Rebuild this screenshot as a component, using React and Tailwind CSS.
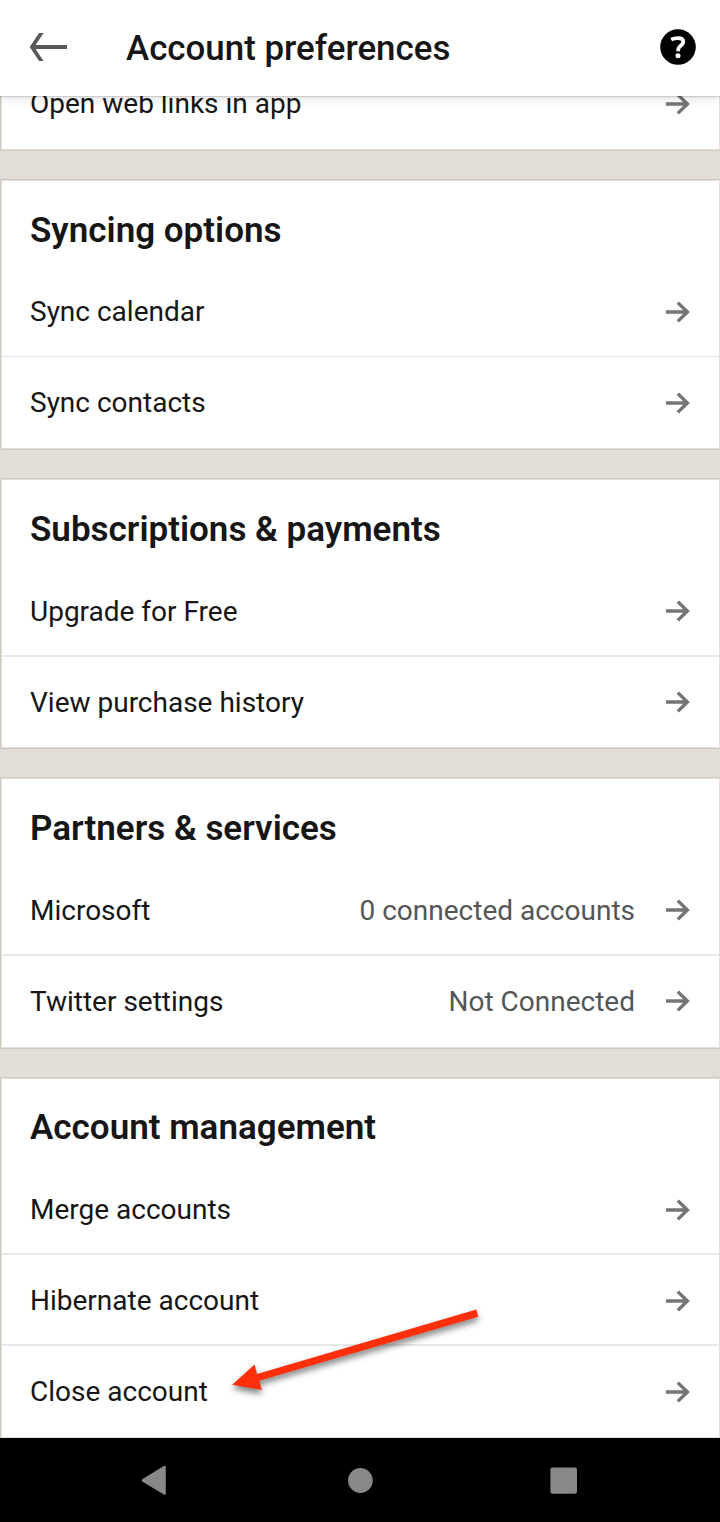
import React from "react";

const sections = [
  {
    title: "Syncing options",
    line: "h-[91px] pt-[2px] border-b border-[#e3e3e3]",
    end: "h-[91px]",
    rows: [{ label: "Sync calendar" }, { label: "Sync contacts" }],
  },
  {
    title: "Subscriptions & payments",
    line: "h-[91.6px] -mb-[0.6px] pt-[3px] border-b-2 border-[#e8e8e8] [&>svg]:mb-[2px]",
    end: "h-[91px] pt-[2px] [&>svg]:mb-px",
    rows: [{ label: "Upgrade for Free" }, { label: "View purchase history" }],
  },
  {
    title: "Partners & services",
    line: "h-[91px] pt-[3px] border-b-2 border-[#e8e8e8] [&>svg]:mb-[2px]",
    end: "h-[91px] pt-px [&>svg]:mb-[2px]",
    rows: [
      { label: "Microsoft", value: "0 connected accounts" },
      { label: "Twitter settings", value: "Not Connected" },
    ],
  },
  {
    title: "Account management",
    line: "h-[91px] pt-[4px] border-b-2 border-[#e8e8e8]",
    end: "h-[91px] pt-[2px]",
    rows: [
      { label: "Merge accounts" },
      { label: "Hibernate account" },
      { label: "Close account" },
    ],
  },
];

function ArrowRight() {
  return (
    <svg width="24" height="22" viewBox="0 0 24 22" fill="none" stroke="#757575" strokeWidth="3.4" className="shrink-0">
      <path d="M0 11H21.5M11.8 1.6L21.4 11L11.8 20.4" />
    </svg>
  );
}

function Row({ label, value, className }) {
  return (
    <div className={`flex items-center pl-7 pr-[29px] text-[28px] text-[#161616] ${className}`}>
      <span className="flex-1 whitespace-nowrap">{label}</span>
      {value && <span className="mr-[31px] whitespace-nowrap text-[#565656]">{value}</span>}
      <ArrowRight />
    </div>
  );
}

function Card({ section }) {
  const last = section.rows.length - 1;

  return (
    <section className="mb-7 shrink-0 border border-r-0 border-[#cec9c1] bg-white">
      <div className="border border-[#e4e0d9]">
        <h2 className="h-[85.2px] pl-7 pt-[28.6px] text-[35px] font-semibold leading-[42px] text-[#161616]">
          {section.title}
        </h2>
        {section.rows.map((row, i) => (
          <Row key={row.label} {...row} className={i < last ? section.line : section.end} />
        ))}
      </div>
    </section>
  );
}

function App() {
  return (
    <div className="flex h-[1522px] w-[720px] flex-col overflow-hidden bg-[#e2ddd7] font-['Roboto',sans-serif]">
      <header className="relative z-10 flex h-24 shrink-0 items-center bg-white pl-[29px] pr-[24px] shadow-[0_1px_1px_rgba(0,0,0,0.12),0_3px_9px_rgba(0,0,0,0.12)]">
        <svg width="38" height="28" viewBox="0 0 38 28" fill="none" stroke="#595959" strokeWidth="3.8" className="mb-[2px]">
          <path d="M38 14H3" />
          <path d="M13 -1L3 14L13 29" />
        </svg>
        <h1 className="ml-[59px] flex-1 pt-[2px] text-[34.9px] leading-[52px] font-medium text-[#161616]">Account preferences</h1>
        <svg width="36" height="36" viewBox="0 0 36 36" className="mb-[2px]">
          <circle cx="18" cy="18" r="17.8" fill="#000" />
          <path
            d="M11.2 10.7C13.2 9.6 15.4 9.2 18 9.2C21.5 9.2 23.2 10.6 23.2 12.7C23.2 15 21.7 16 20.1 17.2C18.7 18.2 18.1 19.3 18.1 22.3"
            fill="none"
            stroke="#fff"
            strokeWidth="3.8"
          />
          <circle cx="18" cy="26.8" r="2.5" fill="#fff" />
        </svg>
      </header>

      <main className="flex min-h-0 flex-1 flex-col overflow-hidden">
        {/* Bottom of the card that is scrolled under the header */}
        <div className="mb-7 flex h-[55px] shrink-0 flex-col justify-end border-b border-l border-[#cec9c1] bg-white">
          <div className="border-x border-b border-[#e4e0d9]">
            <Row label="Open web links in app" className="h-[91px]" />
          </div>
        </div>

        {sections.map((section) => (
          <Card key={section.title} section={section} />
        ))}
      </main>

      <nav className="relative h-[84px] shrink-0 bg-black">
        <svg width="720" height="84" viewBox="0 0 720 84" fill="#888">
          <path d="M164.5 29.2V55.4L142.9 42.3Z" stroke="#888" strokeWidth="2.6" strokeLinejoin="round" />
          <circle cx="360.4" cy="42.5" r="12.4" />
          <rect x="550.4" y="29.4" width="26.6" height="26.4" rx="2" />
        </svg>
        {/* Pointer to "Close account" */}
        <svg
          width="262"
          height="90"
          viewBox="0 0 262 90"
          className="absolute left-[225px] top-[-138px] drop-shadow-[0_4px_3px_rgba(0,0,0,0.5)]"
        >
          <path
            d="M7.2 84.8L29.6 64.5L32 74L251.4 9.5L253.2 16.8L34.2 80.8L36.8 90Z"
            fill="#fe300b"
          />
        </svg>
      </nav>
    </div>
  );
}

export default App;
